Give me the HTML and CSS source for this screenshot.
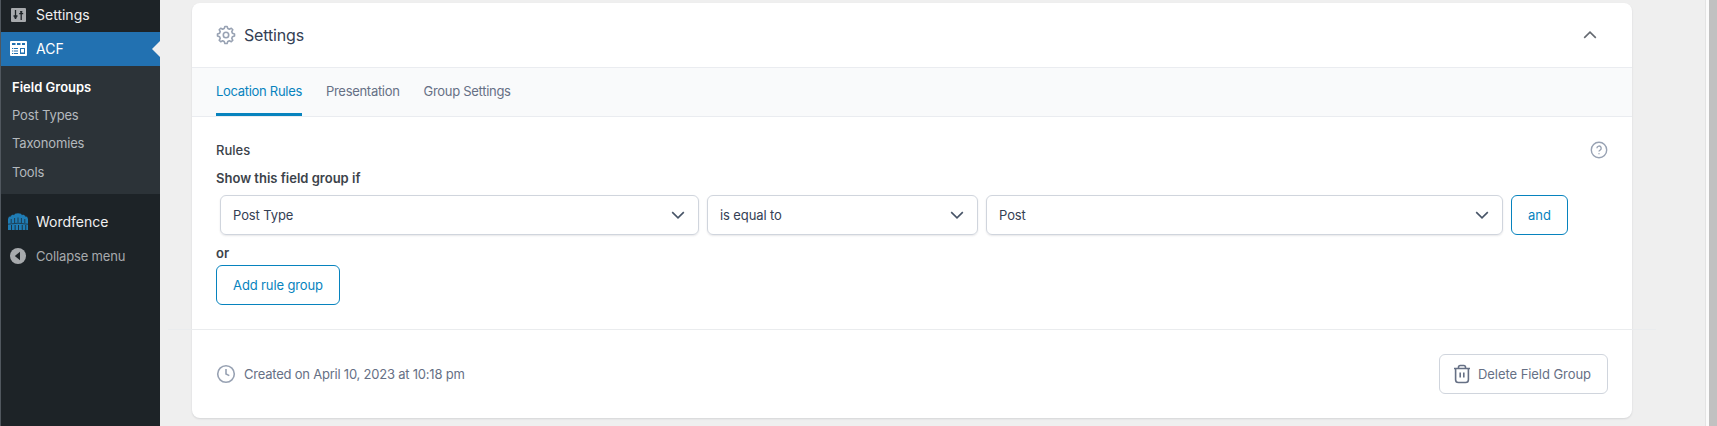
FILE: index.html
```html
<!DOCTYPE html>
<html lang="en">
<head>
<meta charset="utf-8">
<title>Edit Field Group</title>
<link rel="stylesheet" href="styles.css">
</head>
<body>
<div class="app">
  <nav class="sidebar">
    <a class="menu-item settings-item">
      <svg class="menu-icon" viewBox="0 0 20 20"><rect x="3" y="3" width="15" height="14" rx="1" fill="#a7aaad"/><path d="M7.500 5v9M5.500 11h4M6.300 12.500h2.400M13.200 6v9M11.200 8.700h4M12 6.800h2.400" stroke="#1d2327" stroke-width="1.300" fill="none"/></svg>
      <span>Settings</span>
    </a>
    <a class="menu-item active">
      <svg class="menu-icon" viewBox="0 0 20 20"><rect x="2" y="2" width="17" height="15" rx="1" fill="#fff"/><path d="M4 4h3.500v2H4zM9 4h3.500v2H9zM14 4h3v2h-3zM4 9h1.300v1H4zM6 9h4v1H6zM4 11.500h1.300v1H4zM6 11.500h4v1H6zM4 14h1.300v1H4zM6 14h4v1H6zM12 9h5v6h-5z" fill="#2271b1"/><path d="M13 10h3v3.500h-3z" fill="#fff"/></svg>
      <span>ACF</span>
    </a>
    <div class="submenu">
      <a class="current">Field Groups</a>
      <a>Post Types</a>
      <a>Taxonomies</a>
      <a>Tools</a>
    </div>
    <a class="menu-item wordfence">
      <svg class="menu-icon" viewBox="0 0 20 20"><path d="M0 18V7l1-2.500 1.500.5V4L5 2.500l1 .8 1-1.500L10 1.200l3 .6 1 1.500 1-.8L17.500 4v1l1.500-.5L20 7v11h-1.800v-5h-.8v5h-2.800v-5h-.8v5H11v-5h-.8v5H7.500v-5h-.8v5H3.800v-5H3v5z" fill="#1f7cb4"/><path d="M3.200 7v4M6.600 6v5M10 5.500v5M13.400 6v5M16.800 7v4M0 12.200q10-2 20 0" stroke="#1d2327" stroke-width=".7" fill="none"/></svg>
      <span>Wordfence</span>
    </a>
    <a class="menu-item collapse">
      <svg class="menu-icon" viewBox="0 0 20 20"><circle cx="10" cy="10" r="8" fill="#a7aaad"/><path d="M12 5.800v8.400L6.800 10z" fill="#1d2327"/></svg>
      <span>Collapse menu</span>
    </a>
  </nav>

  <main class="content">
    <section class="card">
      <header class="card-head">
        <svg class="gear" viewBox="0 0 20 20"><path d="M8.200 3.600 8.900 1.500h2.200l.7 2.100 1.500.6 2-1 1.500 1.500-1 2 .6 1.500 2.100.7v2.200l-2.100.7-.6 1.500 1 2-1.500 1.500-2-1-1.500.6-.7 2.100H8.900l-.7-2.100-1.500-.6-2 1-1.500-1.500 1-2-.6-1.500-2.100-.7V8.900l2.100-.7.6-1.500-1-2 1.500-1.500 2 1z"/><circle cx="10" cy="10" r="2.700"/></svg>
        <h2>Settings</h2>
        <svg class="toggle" viewBox="0 0 14 8"><path d="M1.200 6.800 7 1.200l5.800 5.600"/></svg>
      </header>
      <div class="tabs">
        <a class="tab selected">Location Rules</a>
        <a class="tab">Presentation</a>
        <a class="tab">Group Settings</a>
      </div>
      <div class="rules">
        <div class="rules-label">
          <span>Rules</span>
          <svg class="help" viewBox="0 0 18 18"><circle cx="9" cy="9" r="7.700"/><path d="M6.900 7.200a2.150 2.150 0 1 1 3.200 1.900c-.8.4-1.100.7-1.100 1.400M9 12.200v1.100"/></svg>
        </div>
        <h4>Show this field group if</h4>
        <div class="rule-row">
          <div class="select param"><span>Post Type</span><svg class="chevron" viewBox="0 0 14 8"><path d="m1.200 1.200 5.800 5.600 5.800-5.600"/></svg></div>
          <div class="select operator"><span>is equal to</span><svg class="chevron" viewBox="0 0 14 8"><path d="m1.200 1.200 5.800 5.600 5.800-5.600"/></svg></div>
          <div class="select value"><span>Post</span><svg class="chevron" viewBox="0 0 14 8"><path d="m1.200 1.200 5.800 5.600 5.800-5.600"/></svg></div>
          <button class="btn and">and</button>
        </div>
        <h4 class="or">or</h4>
        <button class="btn add">Add rule group</button>
      </div>
      <div class="divider"></div>
      <footer class="card-foot">
        <svg class="clock" viewBox="0 0 20 20"><circle cx="10" cy="10" r="8.300"/><path d="M10 5v5l3.300 1.600"/></svg>
        <span class="created">Created on April 10, 2023 at 10:18 pm</span>
        <button class="btn delete">
          <svg class="trash" viewBox="0 0 18 20"><path d="M1 4.500h16M5.500 4.500V3.200Q5.500 1.500 7.200 1.500h3.600q1.700 0 1.700 1.700v1.300M2.600 4.500v11.200q0 2.800 2.800 2.800h7.200q2.800 0 2.800-2.800V4.500M7.200 8.500v5M10.800 8.500v5"/></svg>
          <span>Delete Field Group</span>
        </button>
      </footer>
    </section>
  </main>
  <div class="scrollbar"></div>
</div>
</body>
</html>
```
FILE: styles.css
```css
* { box-sizing: border-box; }
body { margin: 0; background: #efefef; font: 13px/20px Inter, sans-serif; color: #3c434a; overflow: hidden; }
svg { display: block; flex: none; fill: none; }
h2, h4 { margin: 0; }
.app { display: flex; width: 1717px; height: 426px; overflow: hidden; }

.sidebar { width: 160px; flex: none; background: #1d2327; border-left: 1px solid #50575e; color: #f0f0f1; font-size: 14px; }
.menu-item { display: flex; align-items: center; height: 34px; gap: 8px; padding-left: 7px; }
.menu-icon { width: 20px; height: 20px; }
.settings-item { height: 32px; padding-bottom: 2px; }
.active { position: relative; background: #2271b1; color: #fff; }
.active::after { content: ""; position: absolute; right: 0; top: 9px; border: 8px solid transparent; border-left: 0; border-right-color: #efefef; }
.submenu { display: flex; flex-direction: column; height: 128px; padding: 7px 0 0 11px; background: #2c3338; font-size: 13px; letter-spacing: -.15px; color: #b4b9be; }
.submenu a { height: 28.200px; line-height: 28px; }
.submenu .current { color: #fff; font-weight: 600; letter-spacing: 0; }
.wordfence { margin-top: 11px; }
.collapse { color: #a7aaad; font-size: 13px; letter-spacing: -.15px; }

.content { width: 1545px; flex: none; padding: 3px 0 0 32px; }
.card { width: 1440px; height: 415px; background: #fff; border-radius: 8px; box-shadow: 0 1px 2px rgba(16, 24, 40, .12); }
.card-head { display: flex; align-items: center; height: 65px; padding: 0 35px 0 24px; border-bottom: 1px solid #eaecf0; }
.gear { width: 20px; height: 20px; stroke: #98a2b3; stroke-width: 1.600; stroke-linejoin: round; }
.card-head h2 { margin-left: 8px; font-size: 16px; font-weight: 400; letter-spacing: -.15px; color: #344054; }
.toggle { width: 14px; height: 8px; margin-left: auto; stroke: #646970; stroke-width: 1.600; }
.tabs { display: flex; gap: 24px; height: 49px; padding: 0 24px; background: #f9fafb; border-bottom: 1px solid #eaecf0; color: #667085; letter-spacing: -.3px; }
.tab { height: 48px; line-height: 47px; }
.selected { color: #0783be; border-bottom: 3px solid #0783be; }
.rules { height: 212px; padding: 23px 24px 0; }
.rules-label { display: flex; align-items: center; justify-content: space-between; height: 20px; font-weight: 500; }
.help { width: 18px; height: 18px; stroke: #98a2b3; stroke-width: 1.400; }
.rules h4 { margin-top: 8px; font-size: 13px; font-weight: 600; }
.rule-row { display: flex; gap: 8px; margin: 7px 0 0 4px; }
.select { display: flex; align-items: center; justify-content: space-between; height: 40px; padding: 0 13px 0 12px; border: 1px solid #d0d5dd; border-radius: 6px; box-shadow: 0 1px 2px rgba(16, 24, 40, .1); color: #344054; letter-spacing: -.1px; }
.param { width: 479px; }
.operator { width: 271px; }
.value { width: 517px; }
.chevron { width: 14px; height: 8px; stroke: #475467; stroke-width: 1.600; }
.btn { display: flex; align-items: center; justify-content: center; height: 40px; padding: 0; border: 1px solid #0783be; border-radius: 6px; background: #fff; color: #0783be; font: inherit; }
.and { width: 57px; }
.rules .or { margin-top: 8px; line-height: 20px; }
.add { width: 124px; margin-top: 2px; letter-spacing: -.12px; }
.divider { height: 1px; margin: 0 -24px; background: #eaecee; }
.card-foot { display: flex; align-items: center; height: 88px; padding: 0 24px 1px; color: #667085; }
.clock { width: 20px; height: 20px; stroke: #98a2b3; stroke-width: 1.600; }
.created { margin-left: 8px; letter-spacing: -.22px; }
.delete { width: 169px; margin-left: auto; padding-right: 3px; gap: 7px; border-color: #d0d5dd; color: #667085; letter-spacing: -.06px; }
.trash { width: 18px; height: 20px; stroke: #667085; stroke-width: 1.600; }
.scrollbar { width: 12px; flex: none; background: #c1c1c1; border-left: 1px solid #e3e3e3; box-shadow: inset 3px 0 #fafafa; }
```
